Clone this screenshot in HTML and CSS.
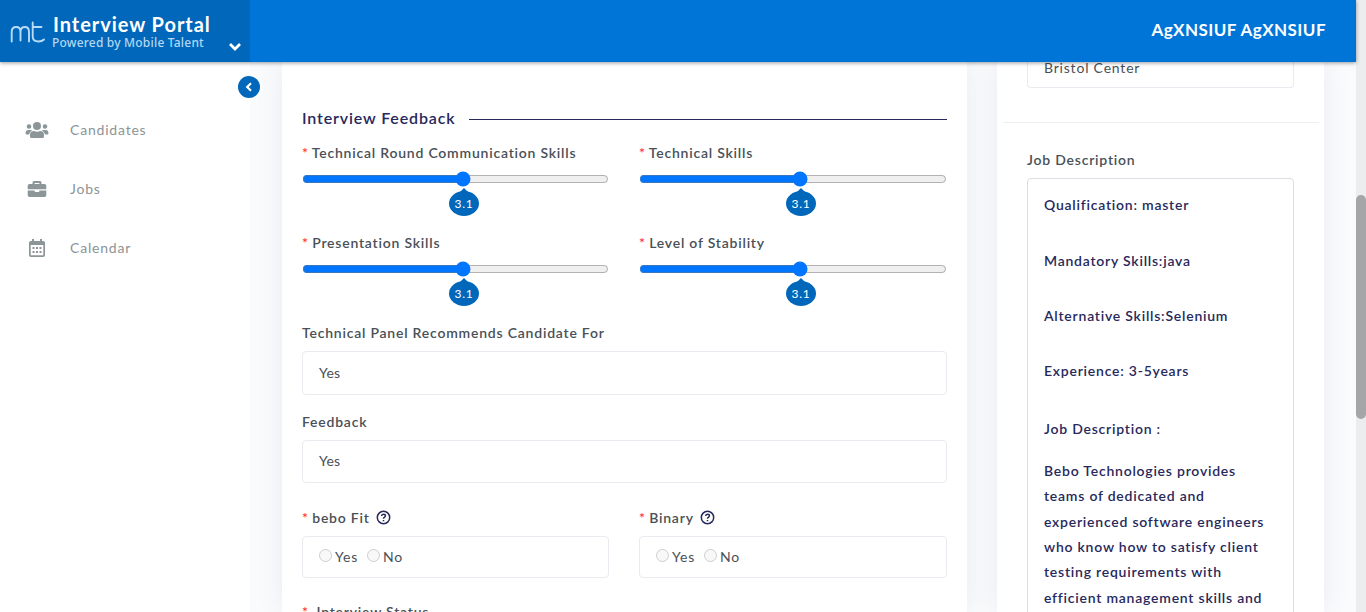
FILE: index.html
```html
<!DOCTYPE html>
<html lang="en">
<head>
<meta charset="utf-8">
<title>Interview Portal</title>
<link rel="stylesheet" href="styles.css">
</head>
<body>
<div class="viewport">
  <div class="page">
    <header class="topbar">
      <div class="brand">
        <svg class="brand-mark" width="36" height="24" viewBox="0 0 36 24"><path d="M1.700 20.500V11Q1.700 6 6.200 6Q10.500 6 10.500 11V19.500M10.500 11Q10.500 6 15 6Q19 6 19 11V20.500M22.700 1.500V15.500Q22.700 20.500 28.500 20.500Q32 20.500 34 18.500M22.700 6H31.500"/></svg>
        <div class="brand-text">
          <div class="brand-title">Interview Portal</div>
          <div class="brand-sub">Powered by Mobile Talent</div>
        </div>
        <svg class="brand-caret" width="14" height="10" viewBox="0 0 14 10"><path d="M2 2l5 5 5-5"/></svg>
      </div>
      <div class="user">AgXNSIUF AgXNSIUF</div>
    </header>
    <div class="body">
      <aside class="sidebar">
        <button class="collapse" aria-label="Collapse"><svg width="8" height="10" viewBox="0 0 8 10"><path d="M6 1.200L2.200 5L6 8.800"/></svg></button>
        <a class="nav"><span class="nav-icon"><svg width="24" height="18" viewBox="0 0 24 18"><circle cx="12" cy="5" r="4"/><circle cx="4" cy="5.500" r="2.300"/><circle cx="20" cy="5.500" r="2.300"/><path d="M5 15.500V14q0-4 4-4q3 1.500 6 0q4 0 4 4v1.500q0 1.500-1.500 1.500h-11Q5 17 5 15.500zM1.500 13.500Q.600 13.500 .600 12.500V11.500Q.600 9 3 9H5Q6.300 9 7.200 9.600Q4.500 11 4 13.500zM22.500 13.500q.900 0 .900-1v-1Q23.400 9 21 9H19q-1.300 0-2.200.600Q19.500 11 20 13.500z"/></svg></span>Candidates</a>
        <a class="nav"><span class="nav-icon"><svg width="20" height="18" viewBox="0 0 20 18"><path fill-rule="evenodd" d="M5.500 4V2.500Q5.500 1 7 1h6q1.500 0 1.500 1.500V4H17.500Q19.300 4 19.300 5.800V9.300H.700V5.800Q.700 4 2.500 4zM7.600 4h4.800V3H7.600zM.700 10.400H7.600V11q0 .900.900.900h3q.900 0 .900-.900v-.600h6.900v4.800q0 1.800-1.800 1.800h-15Q.700 17 .700 15.200z"/></svg></span>Jobs</a>
        <a class="nav"><span class="nav-icon"><svg width="18" height="20" viewBox="0 0 18 20"><path fill-rule="evenodd" d="M4 1h2v2h6V1h2v2h1.200Q17 3 17 4.800V17.200Q17 19 15.200 19H2.800Q1 19 1 17.200V4.800Q1 3 2.800 3H4zM2.700 7v9.700q0 .600.600.600h11.400q.600 0 .600-.600V7z"/><path d="M4.500 9h2v2h-2zM8 9h2v2H8zM11.500 9h2v2h-2zM4.500 13h2v2h-2zM8 13h2v2H8zM11.500 13h2v2h-2z"/></svg></span>Calendar</a>
      </aside>
      <main class="content">
        <section class="card feedback">
          <h2 class="heading">Interview Feedback</h2>
          <div class="grid">
            <div class="rating"><label class="label"><i>*</i> Technical Round Communication Skills</label><div class="slider"><input type="range" min="1" max="5" step="0.1" value="3.1"><output class="bubble">3.1</output></div></div>
            <div class="rating"><label class="label"><i>*</i> Technical Skills</label><div class="slider"><input type="range" min="1" max="5" step="0.1" value="3.1"><output class="bubble">3.1</output></div></div>
            <div class="rating"><label class="label"><i>*</i> Presentation Skills</label><div class="slider"><input type="range" min="1" max="5" step="0.1" value="3.1"><output class="bubble">3.1</output></div></div>
            <div class="rating"><label class="label"><i>*</i> Level of Stability</label><div class="slider"><input type="range" min="1" max="5" step="0.1" value="3.1"><output class="bubble">3.1</output></div></div>
          </div>
          <label class="label">Technical Panel Recommends Candidate For</label>
          <div class="field tall">Yes</div>
          <label class="label">Feedback</label>
          <div class="field">Yes</div>
          <div class="grid choices">
            <div><label class="label"><i>*</i> bebo Fit <svg class="help" width="15" height="15" viewBox="0 0 15 15"><circle cx="7.500" cy="7.500" r="6.200"/><path d="M5.600 6Q5.700 4.200 7.500 4.200Q9.400 4.200 9.400 5.800Q9.400 6.700 8.300 7.300Q7.500 7.700 7.500 8.700M7.500 9.900V11.300"/></svg></label>
              <div class="field radios"><input type="radio" disabled><span>Yes</span><input type="radio" disabled><span>No</span></div></div>
            <div><label class="label"><i>*</i> Binary <svg class="help" width="15" height="15" viewBox="0 0 15 15"><circle cx="7.500" cy="7.500" r="6.200"/><path d="M5.600 6Q5.700 4.200 7.500 4.200Q9.400 4.200 9.400 5.800Q9.400 6.700 8.300 7.300Q7.500 7.700 7.500 8.700M7.500 9.900V11.300"/></svg></label>
              <div class="field radios"><input type="radio" disabled><span>Yes</span><input type="radio" disabled><span>No</span></div></div>
          </div>
          <label class="label status"><i>*</i>&nbsp; Interview Status</label>
        </section>
        <section class="card job">
          <div class="center-field">Bristol Center</div>
          <hr class="rule">
          <label class="label job-label">Job Description</label>
          <div class="description">
            <p class="fact first">Qualification: master</p>
            <p class="fact">Mandatory Skills:java</p>
            <p class="fact">Alternative Skills:Selenium</p>
            <p class="fact last">Experience: 3-5years</p>
            <p class="subhead">Job Description :</p>
            <p class="copy">Bebo Technologies provides<br>teams of dedicated and<br>experienced software engineers<br>who know how to satisfy client<br>testing requirements with<br>efficient management skills and</p>
          </div>
        </section>
      </main>
    </div>
  </div>
  <div class="scrollbar"><div class="thumb"></div></div>
</div>
</body>
</html>
```
FILE: styles.css
```css
* { box-sizing: border-box; }
body { margin: 0; font-family: Lato, "Liberation Sans", sans-serif; font-size: 14px; letter-spacing: 0.8px; color: #495057; }
.viewport { display: flex; height: 612px; overflow: hidden; }
.page { flex: 1; display: flex; flex-direction: column; min-width: 0; }
.topbar { position: relative; z-index: 3; flex: none; height: 62px; display: flex; justify-content: space-between; background: #0075d8; box-shadow: 0 1px 4px rgba(0, 0, 0, 0.4); }
.brand { width: 250px; padding: 0 8px 0 10px; display: flex; background: #0067ba; color: #fff; }
.brand-mark { margin-top: 21px; fill: none; stroke: #b8dcf5; stroke-width: 1.9; stroke-linecap: round; }
.brand-text { margin: 14px 0 0 6px; flex: 1; white-space: nowrap; }
.brand-title { font-size: 20px; line-height: 21px; font-weight: 700; letter-spacing: 0.95px; padding-left: 1px; }
.brand-sub { font-family: "Noto Sans", sans-serif; font-size: 12px; line-height: 14px; font-weight: 500; letter-spacing: 0.2px; color: #b3d7f2; padding-top: 1px; }
.brand-caret { margin-top: 42px; fill: none; stroke: #fff; stroke-width: 2.8; }
.user { padding: 19px 30px 0 0; font-size: 17px; line-height: 22px; font-weight: 700; letter-spacing: 0.45px; color: #fff; }
.body { flex: 1; display: flex; min-height: 0; }
.sidebar { position: relative; flex: none; width: 250px; padding-top: 38px; background: #fff; }
.nav { height: 59px; padding-left: 22px; display: flex; align-items: center; color: #8c9496; }
.nav-icon { width: 30px; margin-right: 18px; display: flex; justify-content: center; fill: #8c9699; }
.collapse { position: absolute; z-index: 2; right: -10px; top: 14px; width: 22px; height: 22px; padding: 0; border: 0; border-radius: 50%; display: flex; align-items: center; justify-content: center; background: #0067ba; box-shadow: 0 0 0 2px #fff; }
.collapse svg { fill: none; stroke: #fff; stroke-width: 2.2; }
.content { flex: 1; display: flex; gap: 30px; padding: 0 32px; background: #fafbfd; }
.card { background: #fff; box-shadow: 0 0 28px rgba(20, 30, 50, 0.07); }
.feedback { width: 685px; padding: 46px 20px 0; }
.heading { margin: 0 0 15px; display: flex; align-items: center; gap: 14px; font-size: 16px; line-height: 20px; font-weight: 600; letter-spacing: 0.85px; color: #27295c; }
.heading::after { content: ""; flex: 1; height: 1px; margin-top: 2px; background: #27295c; }
.grid { display: grid; grid-template-columns: 307px 308px; column-gap: 30px; }
.rating { height: 90px; }
.label { display: block; font-size: 14px; line-height: 20px; font-weight: 600; letter-spacing: 0.78px; }
.label i { margin-right: -0.8px; color: #f33; font-style: normal; }
.slider { position: relative; height: 16px; margin-top: 8px; }
.slider input { display: block; width: 100%; height: 16px; margin: 0; padding: 0 1px; }
.bubble { position: absolute; left: 147px; top: 20px; width: 30px; height: 25px; border-radius: 50%; background: #0067ba; color: #fff; font-size: 12px; line-height: 26px; letter-spacing: 0.8px; text-align: center; }
.bubble::before { content: ""; position: absolute; left: 9px; top: -3px; border: 6px solid transparent; border-top: 0; border-bottom-color: #0067ba; }
.field { height: 43px; margin: 8px 0 25px; padding: 0 16px 2px; display: flex; align-items: center; border: 1px solid #eaebf0; border-radius: 4px; letter-spacing: 0.2px; }
.tall { height: 44px; margin-bottom: 17px; }
.radios { height: 42px; margin-bottom: 24px; padding-bottom: 1px; font-size: 14px; letter-spacing: 0.8px; }
.radios input { width: 13px; height: 13px; margin: -2px 3px 0 0; }
.radios span { margin-right: 9px; }
.help { margin-left: 2px; vertical-align: -2px; fill: none; stroke: #27295c; stroke-width: 1.5; }
.job { width: 327px; padding: 0 30px; }
.center-field { height: 26px; padding: 0 16px; line-height: 12px; border: 1px solid #eaebf0; border-top: 0; border-radius: 0 0 4px 4px; }
.rule { height: 1px; margin: 34px -25px 27px -24px; border: 0; background: #eceef0; }
.job-label { margin-bottom: 8px; }
.description { height: 460px; padding: 16px 16px; border: 1px solid #dcdde3; border-radius: 4px; font-weight: 600; letter-spacing: 0.77px; color: #27295c; white-space: nowrap; }
.description p { margin: 0; }
.fact { height: 55px; line-height: 20px; }
.description .first { height: 56px; }
.description .last { height: 58px; }
.subhead { line-height: 20px; }
.description .copy { margin-top: 18.700px; line-height: 25.400px; }
.scrollbar { width: 10px; padding-top: 195px; background: #ebedef; }
.thumb { height: 224px; border-radius: 5px; background: #a4a6a8; }
```
